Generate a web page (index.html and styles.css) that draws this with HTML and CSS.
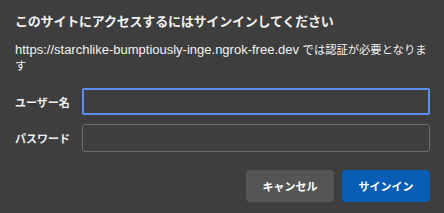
FILE: index.html
```html
<!DOCTYPE html>
<html lang="ja">
<head>
<meta charset="utf-8">
<link rel="stylesheet" href="styles.css">
</head>
<body>
<div class="dialog">
  <h1 class="title">このサイトにアクセスするにはサインインしてください</h1>
  <p class="message">https://starchlike-bumptiously-inge.ngrok-free.dev <span class="message-ja">では認証が必要となります</span></p>
  <form class="fields">
    <label class="label" for="user">ユーザー名</label>
    <input class="input input-focus" id="user" type="text">
    <label class="label" for="pass">パスワード</label>
    <input class="input" id="pass" type="password">
  </form>
  <div class="actions">
    <button class="btn btn-cancel" type="button">キャンセル</button>
    <button class="btn btn-primary" type="button">サインイン</button>
  </div>
</div>
</body>
</html>
```
FILE: styles.css
```css
html, body {
  margin: 0;
  padding: 0;
  background: #3e3e3e;
}
body {
  width: 444px;
  height: 213px;
  overflow: hidden;
  font-family: "Liberation Sans", "Noto Sans CJK JP", sans-serif;
  color: #f2f2f2;
}
.dialog {
  padding: 12px 14px 0 15px;
  display: flex;
  flex-direction: column;
}
.title {
  margin: 0;
  font-size: 13px;
  font-weight: 700;
  line-height: 20px;
  letter-spacing: -0.2px;
}
.message {
  margin: 10px 0 0 0;
  font-size: 13px;
  line-height: 16px;
}
.message-ja {
  font-size: 11.3px;
  line-height: 16px;
}
.fields {
  margin: 14px 0 0 0;
  display: grid;
  grid-template-columns: 67px 1fr;
  row-gap: 9px;
  align-items: center;
}
.label {
  font-size: 11px;
  font-weight: 700;
  color: #eeeeee;
}
.input {
  box-sizing: border-box;
  height: 28px;
  margin: 0;
  background: #3e3e3e;
  border: 1px solid #6b6b6b;
  border-radius: 3px;
  color: #fff;
  outline: none;
}
.input-focus {
  height: 27px;
  border: 2px solid #5a8ded;
  border-radius: 2px;
}
.actions {
  margin-top: 18px;
  display: flex;
  justify-content: flex-end;
  gap: 8px;
}
.btn {
  width: 88px;
  height: 32px;
  border: none;
  border-radius: 4px;
  font-family: "Noto Sans CJK JP", sans-serif;
  font-size: 11px;
  font-weight: 700;
  color: #ffffff;
  padding: 0;
}
.btn-cancel {
  background: #555555;
}
.btn-primary {
  background: #0a5db4;
}
```
